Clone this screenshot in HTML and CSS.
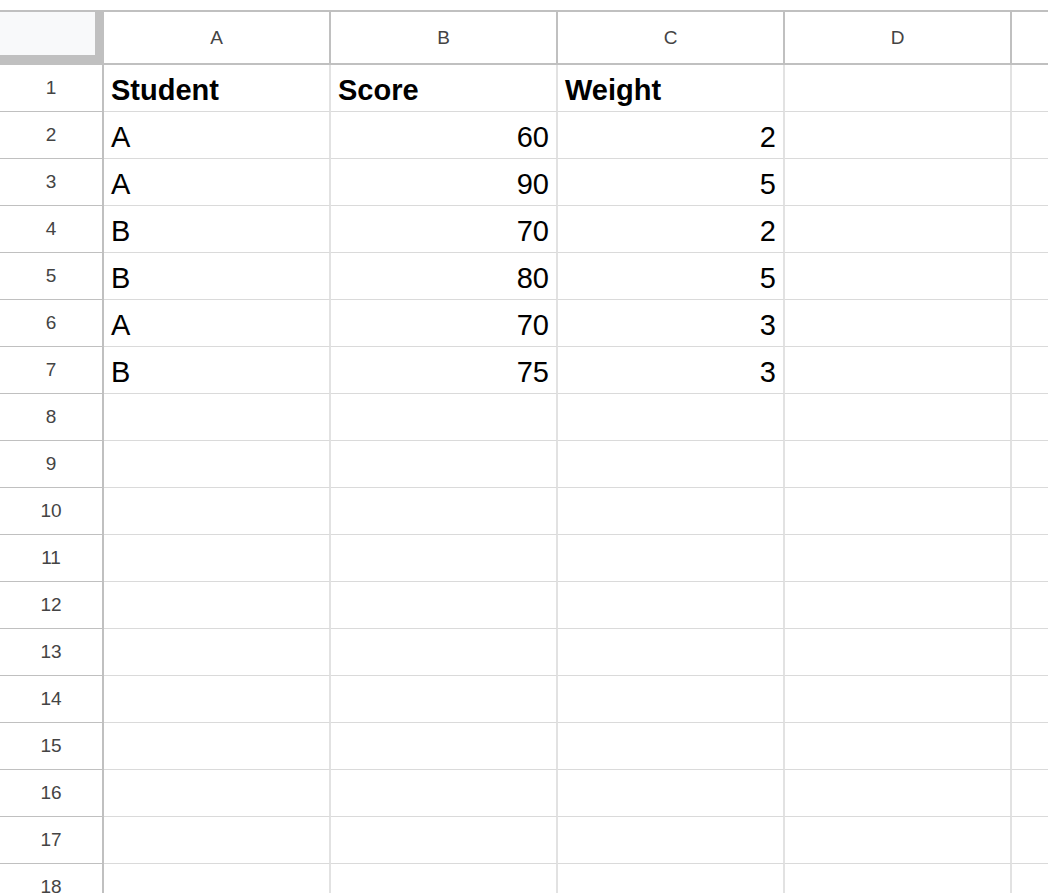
FILE: index.html
```html
<!DOCTYPE html>
<html lang="en">
<head>
    <meta charset="UTF-8">
    <meta name="viewport" content="width=device-width, initial-scale=1.0">
    <title>Student Scores</title>
    <link rel="stylesheet" href="styles.css">
</head>
<body>
    <div class="sheet">
        <!-- column headers -->
        <div class="corner"></div>
        <div class="col-head">A</div>
        <div class="col-head">B</div>
        <div class="col-head">C</div>
        <div class="col-head">D</div>
        <div class="col-head"></div>

        <div class="row-head">1</div>
        <div class="cell bold">Student</div>
        <div class="cell bold">Score</div>
        <div class="cell bold">Weight</div>
        <div class="cell"></div>
        <div class="cell"></div>

        <div class="row-head">2</div>
        <div class="cell">A</div>
        <div class="cell num">60</div>
        <div class="cell num">2</div>
        <div class="cell"></div>
        <div class="cell"></div>

        <div class="row-head">3</div>
        <div class="cell">A</div>
        <div class="cell num">90</div>
        <div class="cell num">5</div>
        <div class="cell"></div>
        <div class="cell"></div>

        <div class="row-head">4</div>
        <div class="cell">B</div>
        <div class="cell num">70</div>
        <div class="cell num">2</div>
        <div class="cell"></div>
        <div class="cell"></div>

        <div class="row-head">5</div>
        <div class="cell">B</div>
        <div class="cell num">80</div>
        <div class="cell num">5</div>
        <div class="cell"></div>
        <div class="cell"></div>

        <div class="row-head">6</div>
        <div class="cell">A</div>
        <div class="cell num">70</div>
        <div class="cell num">3</div>
        <div class="cell"></div>
        <div class="cell"></div>

        <div class="row-head">7</div>
        <div class="cell">B</div>
        <div class="cell num">75</div>
        <div class="cell num">3</div>
        <div class="cell"></div>
        <div class="cell"></div>

        <div class="row-head">8</div>
        <div class="cell"></div><div class="cell"></div><div class="cell"></div><div class="cell"></div><div class="cell"></div>
        <div class="row-head">9</div>
        <div class="cell"></div><div class="cell"></div><div class="cell"></div><div class="cell"></div><div class="cell"></div>
        <div class="row-head">10</div>
        <div class="cell"></div><div class="cell"></div><div class="cell"></div><div class="cell"></div><div class="cell"></div>
        <div class="row-head">11</div>
        <div class="cell"></div><div class="cell"></div><div class="cell"></div><div class="cell"></div><div class="cell"></div>
        <div class="row-head">12</div>
        <div class="cell"></div><div class="cell"></div><div class="cell"></div><div class="cell"></div><div class="cell"></div>
        <div class="row-head">13</div>
        <div class="cell"></div><div class="cell"></div><div class="cell"></div><div class="cell"></div><div class="cell"></div>
        <div class="row-head">14</div>
        <div class="cell"></div><div class="cell"></div><div class="cell"></div><div class="cell"></div><div class="cell"></div>
        <div class="row-head">15</div>
        <div class="cell"></div><div class="cell"></div><div class="cell"></div><div class="cell"></div><div class="cell"></div>
        <div class="row-head">16</div>
        <div class="cell"></div><div class="cell"></div><div class="cell"></div><div class="cell"></div><div class="cell"></div>
        <div class="row-head">17</div>
        <div class="cell"></div><div class="cell"></div><div class="cell"></div><div class="cell"></div><div class="cell"></div>
        <div class="row-head">18</div>
        <div class="cell"></div><div class="cell"></div><div class="cell"></div><div class="cell"></div><div class="cell"></div>
    </div>
</body>
</html>
```
FILE: styles.css
```css
html, body {
    margin: 0;
    height: 100%;
    overflow: hidden;
    background: #fff;
}
body {
    padding-top: 10px;
    font-family: "Liberation Sans", Arial, sans-serif;
}
.sheet {
    display: grid;
    grid-template-columns: 104px repeat(5, 227px);
    grid-template-rows: 53px repeat(18, 47px);
    border-top: 2px solid #c0c0c0;
    width: max-content;
}
.sheet > div {
    box-sizing: border-box;
}
.corner {
    background: #f8f9fa;
    border-right: 9px solid #c0c0c0;
    border-bottom: 10px solid #c0c0c0;
}
.col-head {
    display: flex;
    align-items: center;
    justify-content: center;
    border-right: 2px solid #c0c0c0;
    border-bottom: 2px solid #c0c0c0;
    font-size: 19px;
    color: #444;
}
.row-head {
    display: flex;
    align-items: center;
    justify-content: center;
    border-right: 2px solid #c0c0c0;
    border-bottom: 1px solid #c0c0c0;
    font-size: 19px;
    color: #444;
}
.cell {
    display: flex;
    align-items: flex-end;
    padding: 0 7px 6px 7px;
    border-right: 2px solid #e2e2e2;
    border-bottom: 1px solid #dadada;
    font-size: 29px;
    line-height: 30px;
    color: #000;
    white-space: nowrap;
}
.num {
    justify-content: flex-end;
}
.bold {
    font-weight: bold;
}
```
